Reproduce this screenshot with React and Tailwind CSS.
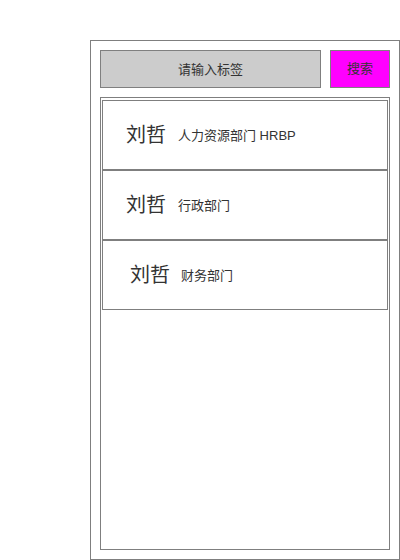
export default function App() {
  const items = [
    { name: "刘哲", dept: "人力资源部门 HRBP", pl: "pl-[23px]", ml: "ml-[12px]" },
    { name: "刘哲", dept: "行政部门", pl: "pl-[23px]", ml: "ml-[12px]" },
    { name: "刘哲", dept: "财务部门", pl: "pl-[27px]", ml: "ml-[11px]" },
  ];
  return (
    <div
      className="w-[400px] h-[560px] bg-white pl-[90px] pt-[40px]"
      style={{ fontFamily: '"Liberation Sans", "Noto Sans CJK SC", sans-serif' }}
    >
      <div className="w-[310px] h-[520px] border border-[#7f7f7f] p-[9px] flex flex-col gap-[9px]">
        <div className="flex gap-[9px] h-[38px]">
          <input
            className="w-[221px] h-[38px] bg-[#cccccc] border border-[#7f7f7f] text-center text-[13px] text-[#333] placeholder:text-[#333] outline-none"
            placeholder="请输入标签"
          />
          <button className="w-[60px] h-[38px] bg-[#ff00ff] border border-[#7f7f7f] text-[13px] text-[#333]">
            搜索
          </button>
        </div>
        <div className="flex-1 border border-[#7f7f7f] pt-[1px] px-[1px] flex flex-col">
          {items.map((it, i) => (
            <div
              key={i}
              className={`h-[70px] border border-[#7f7f7f] flex items-center ${it.pl} ${i === 0 ? "mt-[1px]" : ""}`}
            >
              <span className="text-[20px] text-[#333] leading-none">{it.name}</span>
              <span className={`text-[13px] text-[#333] leading-none ${it.ml}`}>{it.dept}</span>
            </div>
          ))}
        </div>
      </div>
    </div>
  );
}
